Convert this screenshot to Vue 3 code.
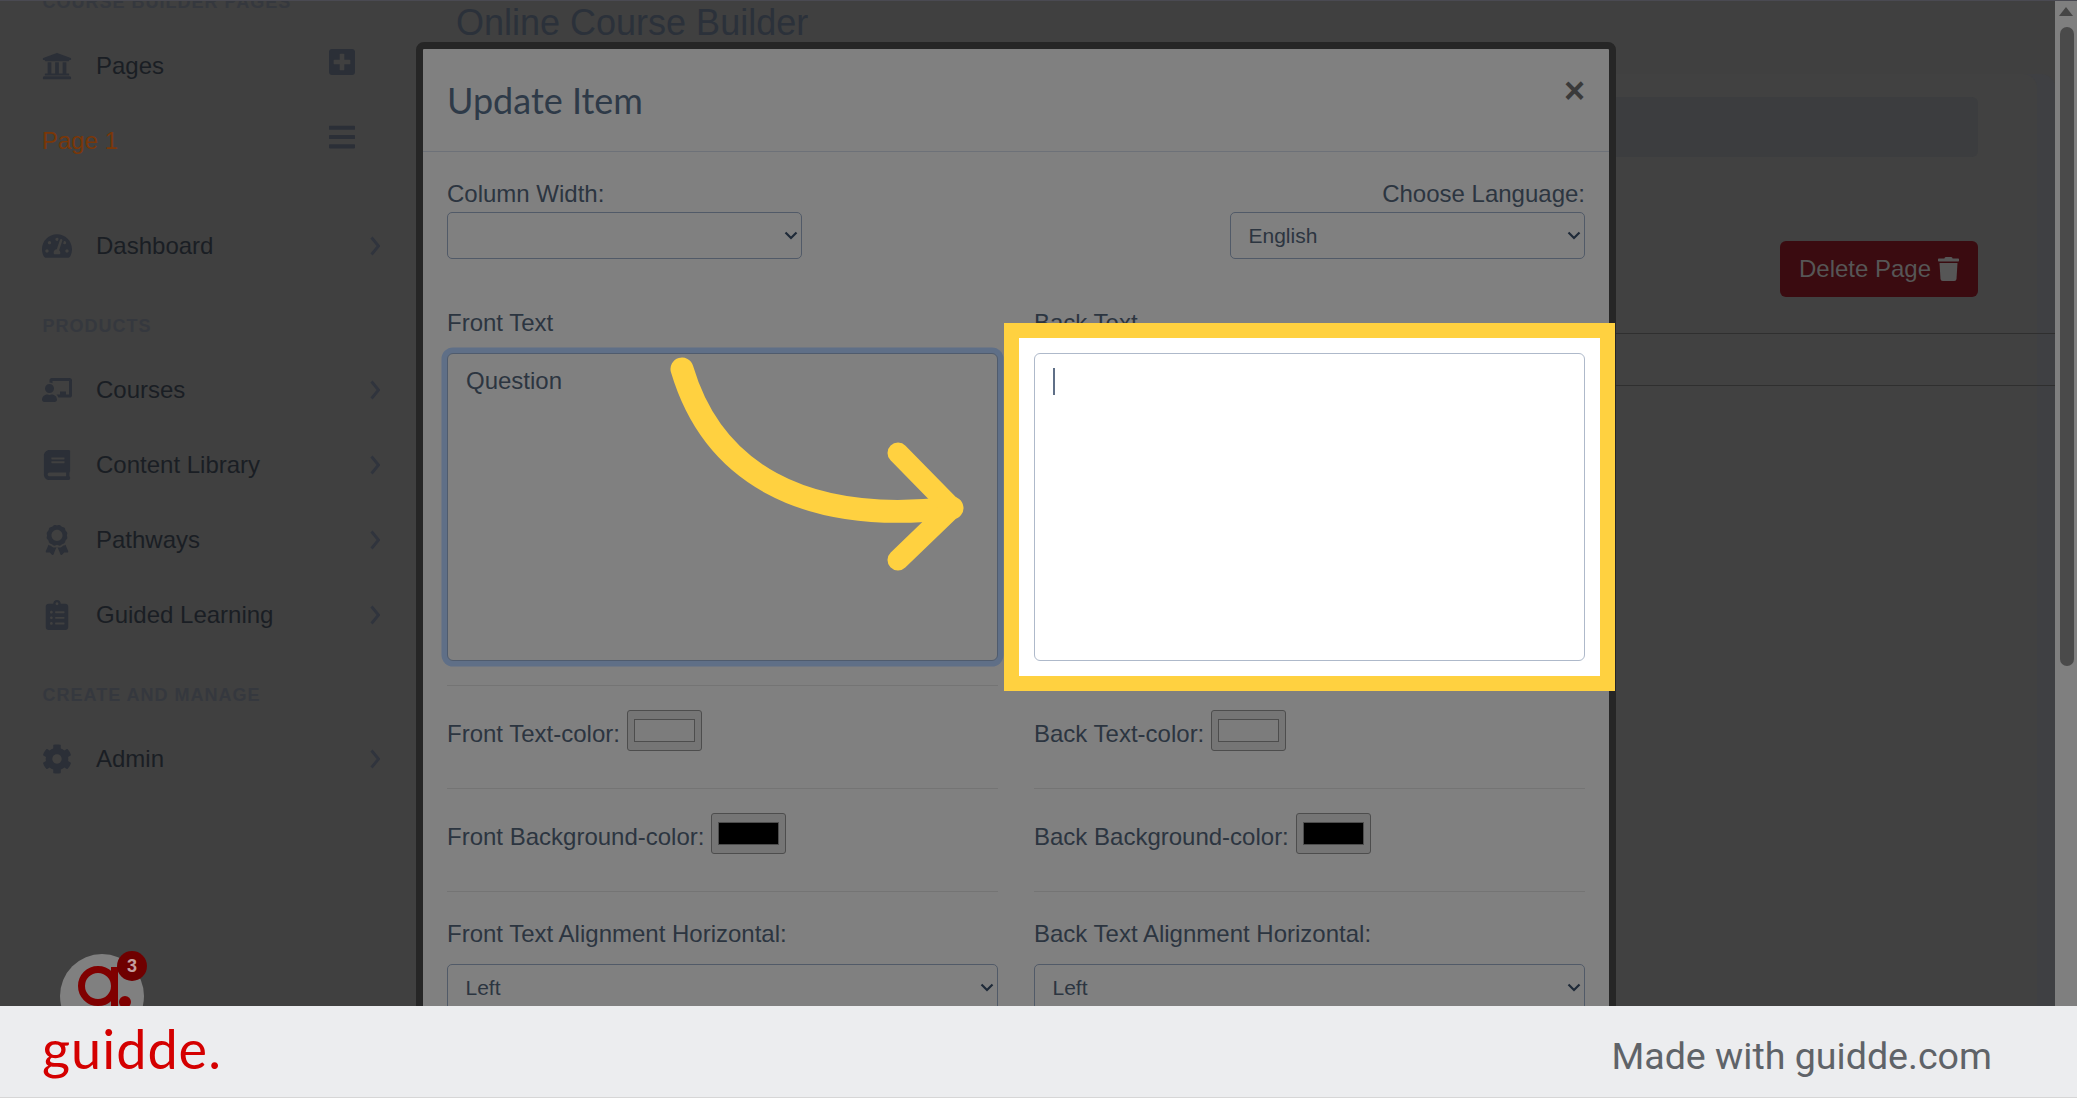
<script setup>
const ICONS = {
  university: { vb: '0 0 512 512', d: 'M496 128v16a8 8 0 0 1-8 8h-24v12c0 6.627-5.373 12-12 12H60c-6.627 0-12-5.373-12-12v-12H24a8 8 0 0 1-8-8v-16a8 8 0 0 1 4.941-7.392l232-88a7.996 7.996 0 0 1 6.118 0l232 88A8 8 0 0 1 496 128zm-24 304H40c-13.255 0-24 10.745-24 24v16a8 8 0 0 0 8 8h464a8 8 0 0 0 8-8v-16c0-13.255-10.745-24-24-24zM96 192v192H60c-6.627 0-12 5.373-12 12v20h416v-20c0-6.627-5.373-12-12-12h-36V192h-64v192h-64V192h-64v192h-64V192H96z' },
  plus: { vb: '0 0 448 512', d: 'M400 32H48C21.5 32 0 53.5 0 80v352c0 26.5 21.5 48 48 48h352c26.5 0 48-21.5 48-48V80c0-26.5-21.5-48-48-48zm-32 252c0 6.6-5.4 12-12 12h-92v92c0 6.6-5.4 12-12 12h-56c-6.6 0-12-5.4-12-12v-92H92c-6.6 0-12-5.4-12-12v-56c0-6.6 5.4-12 12-12h92v-92c0-6.6 5.4-12 12-12h56c6.6 0 12 5.4 12 12v92h92c6.6 0 12 5.4 12 12v56z' },
  bars: { vb: '0 0 448 512', d: 'M16 132h416c8.837 0 16-7.163 16-16V76c0-8.837-7.163-16-16-16H16C7.163 60 0 67.163 0 76v40c0 8.837 7.163 16 16 16zm0 160h416c8.837 0 16-7.163 16-16v-40c0-8.837-7.163-16-16-16H16c-8.837 0-16 7.163-16 16v40c0 8.837 7.163 16 16 16zm0 160h416c8.837 0 16-7.163 16-16v-40c0-8.837-7.163-16-16-16H16c-8.837 0-16 7.163-16 16v40c0 8.837 7.163 16 16 16z' },
  tacho: { vb: '0 0 576 512', d: 'M288 32C128.94 32 0 160.94 0 320c0 52.8 14.25 102.26 39.06 144.8 5.61 9.62 16.3 15.2 27.44 15.2h443c11.14 0 21.83-5.58 27.44-15.2C561.75 422.26 576 372.8 576 320c0-159.06-128.94-288-288-288zm0 64c14.71 0 26.58 10.13 30.32 23.65-1.11 2.26-2.64 4.23-3.45 6.67l-9.22 27.67c-5.13 3.49-10.97 6.01-17.64 6.01-17.67 0-32-14.33-32-32S270.33 96 288 96zM96 384c-17.67 0-32-14.33-32-32s14.33-32 32-32 32 14.33 32 32-14.33 32-32 32zm48-160c-17.67 0-32-14.33-32-32s14.33-32 32-32 32 14.33 32 32-14.33 32-32 32zm246.77-72.41l-61.33 184C343.13 347.33 352 364.54 352 384c0 11.72-3.38 22.55-8.88 32H232.88c-5.5-9.45-8.88-20.28-8.88-32 0-33.94 26.5-61.43 59.9-63.59l61.34-184.01c4.17-12.56 17.73-19.45 30.36-15.17 12.57 4.19 19.35 17.79 15.17 30.36zm14.66 57.2l15.52-46.55c3.47-1.29 7.13-2.23 11.05-2.23 17.67 0 32 14.33 32 32s-14.33 32-32 32c-11.38-.01-20.89-6.28-26.57-15.22zM480 384c-17.67 0-32-14.33-32-32s14.33-32 32-32 32 14.33 32 32-14.33 32-32 32z' },
  teacher: { vb: '0 0 640 512', d: 'M208 352c-2.39 0-4.78.35-7.06 1.09C187.98 357.3 174.35 360 160 360c-14.35 0-27.98-2.7-40.95-6.91-2.28-.74-4.66-1.09-7.05-1.09C49.94 352-.33 402.48 0 464.62.14 490.88 21.73 512 48 512h224c26.27 0 47.86-21.12 48-47.38.33-62.14-49.94-112.62-112-112.62zm-48-32c53.02 0 96-42.98 96-96s-42.98-96-96-96-96 42.98-96 96 42.98 96 96 96zM592 0H208c-26.47 0-48 22.25-48 49.59V96c23.42 0 45.1 6.78 64 17.8V64h352v288h-64v-64H384v64h-76.24c19.1 16.69 33.12 38.73 39.69 64H592c26.47 0 48-22.25 48-49.59V49.59C640 22.25 618.47 0 592 0z' },
  book: { vb: '0 0 448 512', d: 'M448 360V24c0-13.3-10.7-24-24-24H96C43 0 0 43 0 96v320c0 53 43 96 96 96h328c13.3 0 24-10.7 24-24v-16c0-7.5-3.5-14.3-8.9-18.7-4.2-15.4-4.2-59.3 0-74.7 5.4-4.3 8.9-11.1 8.9-18.6zM128 134c0-3.3 2.7-6 6-6h212c3.3 0 6 2.7 6 6v20c0 3.3-2.7 6-6 6H134c-3.3 0-6-2.7-6-6v-20zm0 64c0-3.3 2.7-6 6-6h212c3.3 0 6 2.7 6 6v20c0 3.3-2.7 6-6 6H134c-3.3 0-6-2.7-6-6v-20zm253.4 250H96c-17.7 0-32-14.3-32-32 0-17.6 14.4-32 32-32h285.4c-1.9 17.1-1.9 46.9 0 64z' },
  award: { vb: '0 0 384 512', d: 'M97.12 362.63c-8.69-8.69-4.16-6.24-25.12-11.85-9.51-2.55-17.87-7.45-25.43-13.32L1.2 448.7c-4.39 10.77 3.81 22.47 15.43 22.03l52.69-2.01L105.56 507c8 8.44 22.04 5.81 26.43-4.96l52.05-127.62c-10.84 6.04-22.87 9.58-35.31 9.58-19.5 0-37.82-7.59-51.61-21.37zM382.8 448.7l-45.37-111.24c-7.56 5.88-15.92 10.77-25.43 13.32-21.07 5.64-16.45 3.18-25.12 11.85-13.79 13.78-32.12 21.37-51.62 21.37-12.44 0-24.47-3.55-35.31-9.58L252 502.04c4.39 10.77 18.44 13.4 26.43 4.96l36.25-38.28 52.69 2.01c11.62.44 19.82-11.27 15.43-22.03zM263 340c15.28-15.55 17.03-14.21 38.79-20.14 13.89-3.79 24.75-14.84 28.47-28.98 7.48-28.4 5.54-24.97 25.95-45.75 10.17-10.35 14.14-25.44 10.42-39.58-7.47-28.38-7.48-24.42 0-52.83 3.72-14.14-.25-29.23-10.42-39.58-20.41-20.78-18.47-17.36-25.95-45.75-3.72-14.14-14.58-25.19-28.47-28.98-27.88-7.61-24.52-5.62-44.95-26.41-10.17-10.35-25-14.4-38.89-10.61-27.87 7.6-23.98 7.61-51.9 0-13.89-3.79-28.72.25-38.89 10.61-20.41 20.78-17.05 18.8-44.94 26.41-13.89 3.79-24.75 14.84-28.47 28.98-7.47 28.39-5.54 24.97-25.95 45.75-10.17 10.35-14.15 25.44-10.42 39.58 7.47 28.36 7.48 24.4 0 52.82-3.72 14.14.25 29.23 10.42 39.59 20.41 20.78 18.47 17.35 25.95 45.75 3.72 14.14 14.58 25.19 28.47 28.98C104.6 325.96 106.27 325 121 340c13.23 13.47 33.84 15.88 49.74 5.82a39.676 39.676 0 0 1 42.53 0c15.89 10.06 36.5 7.65 49.73-5.82zM97.66 175.96c0-53.03 42.24-96.02 94.34-96.02s94.34 42.99 94.34 96.02-42.24 96.02-94.34 96.02-94.34-42.99-94.34-96.02z' },
  clipboard: { vb: '0 0 384 512', d: 'M336 64h-80c0-35.3-28.7-64-64-64s-64 28.7-64 64H48C21.5 64 0 85.5 0 112v352c0 26.5 21.5 48 48 48h288c26.5 0 48-21.5 48-48V112c0-26.5-21.5-48-48-48zM96 424c-13.3 0-24-10.7-24-24s10.7-24 24-24 24 10.7 24 24-10.7 24-24 24zm0-96c-13.3 0-24-10.7-24-24s10.7-24 24-24 24 10.7 24 24-10.7 24-24 24zm0-96c-13.3 0-24-10.7-24-24s10.7-24 24-24 24 10.7 24 24-10.7 24-24 24zm96-192c13.3 0 24 10.7 24 24s-10.7 24-24 24-24-10.7-24-24 10.7-24 24-24zm128 368c0 4.4-3.6 8-8 8H168c-4.4 0-8-3.6-8-8v-16c0-4.4 3.6-8 8-8h144c4.4 0 8 3.6 8 8v16zm0-96c0 4.4-3.6 8-8 8H168c-4.4 0-8-3.6-8-8v-16c0-4.4 3.6-8 8-8h144c4.4 0 8 3.6 8 8v16zm0-96c0 4.4-3.6 8-8 8H168c-4.4 0-8-3.6-8-8v-16c0-4.4 3.6-8 8-8h144c4.4 0 8 3.6 8 8v16z' },
  cog: { vb: '0 0 512 512', d: 'M487.4 315.7l-42.6-24.6c4.3-23.2 4.3-47 0-70.2l42.6-24.6c4.9-2.8 7.1-8.6 5.5-14-11.1-35.6-30-67.8-54.7-94.6-3.8-4.1-10-5.1-14.8-2.3L380.8 110c-17.9-15.4-38.5-27.3-60.8-35.1V25.8c0-5.6-3.9-10.5-9.4-11.7-36.7-8.2-74.3-7.8-109.2 0-5.5 1.2-9.4 6.1-9.4 11.7V75c-22.2 7.9-42.8 19.8-60.8 35.1L88.7 85.5c-4.9-2.8-11-1.9-14.8 2.3-24.7 26.7-43.6 58.9-54.7 94.6-1.7 5.4.6 11.2 5.5 14L67.3 221c-4.3 23.2-4.3 47 0 70.2l-42.6 24.6c-4.9 2.8-7.1 8.6-5.5 14 11.1 35.6 30 67.8 54.7 94.6 3.8 4.1 10 5.1 14.8 2.3l42.6-24.6c17.9 15.4 38.5 27.3 60.8 35.1v49.2c0 5.6 3.9 10.5 9.4 11.7 36.7 8.2 74.3 7.8 109.2 0 5.5-1.2 9.4-6.1 9.4-11.7v-49.2c22.2-7.9 42.8-19.8 60.8-35.1l42.6 24.6c4.9 2.8 11 1.9 14.8-2.3 24.7-26.7 43.6-58.9 54.7-94.6 1.5-5.5-.7-11.3-5.6-14.1zM256 336c-44.1 0-80-35.9-80-80s35.9-80 80-80 80 35.9 80 80-35.9 80-80 80z' },
  trash: { vb: '0 0 448 512', d: 'M432 32H312l-9.4-18.7A24 24 0 0 0 281.1 0H166.8a23.72 23.72 0 0 0-21.4 13.3L136 32H16A16 16 0 0 0 0 48v32a16 16 0 0 0 16 16h416a16 16 0 0 0 16-16V48a16 16 0 0 0-16-16zM53.2 467a48 48 0 0 0 47.9 45h245.8a48 48 0 0 0 47.9-45L416 128H32z' }
}

const productItems = [
  { label: 'Courses', icon: 'teacher' },
  { label: 'Content Library', icon: 'book' },
  { label: 'Pathways', icon: 'award' },
  { label: 'Guided Learning', icon: 'clipboard' }
]

const colorRows = [
  { front: 'Front Text-color:', back: 'Back Text-color:', value: '#7c7c7c' },
  { front: 'Front Background-color:', back: 'Back Background-color:', value: '#000000' }
]
</script>

<template>
  <div class="page">
    <div class="viewport">
      <aside class="sidebar">
        <div class="section first">COURSE BUILDER PAGES</div>
        <div class="nav-row">
          <svg class="icon" :viewBox="ICONS.university.vb"><path :d="ICONS.university.d" /></svg>
          <span class="nav-label">Pages</span>
          <svg class="icon action" :viewBox="ICONS.plus.vb"><path :d="ICONS.plus.d" /></svg>
        </div>
        <div class="nav-row">
          <span class="page-link">Page 1</span>
          <svg class="icon action" :viewBox="ICONS.bars.vb"><path :d="ICONS.bars.d" /></svg>
        </div>
        <div class="nav-row dash">
          <svg class="icon" :viewBox="ICONS.tacho.vb"><path :d="ICONS.tacho.d" /></svg>
          <span class="nav-label">Dashboard</span>
          <svg class="chev" viewBox="0 0 10 20"><path d="M1.5 1.5 8.5 10 1.5 18.5" /></svg>
        </div>
        <div class="section">PRODUCTS</div>
        <div v-for="item in productItems" :key="item.label" class="nav-row">
          <svg class="icon" :viewBox="ICONS[item.icon].vb"><path :d="ICONS[item.icon].d" /></svg>
          <span class="nav-label">{{ item.label }}</span>
          <svg class="chev" viewBox="0 0 10 20"><path d="M1.5 1.5 8.5 10 1.5 18.5" /></svg>
        </div>
        <div class="section">CREATE AND MANAGE</div>
        <div class="nav-row">
          <svg class="icon" :viewBox="ICONS.cog.vb"><path :d="ICONS.cog.d" /></svg>
          <span class="nav-label">Admin</span>
          <svg class="chev" viewBox="0 0 10 20"><path d="M1.5 1.5 8.5 10 1.5 18.5" /></svg>
        </div>
      </aside>

      <main class="main">
        <h1 class="heading">Online Course Builder</h1>
        <section class="card">
          <div class="grey-box"></div>
          <div class="actions">
            <button class="delete-btn">
              <span>Delete Page</span>
              <svg class="trash" :viewBox="ICONS.trash.vb"><path :d="ICONS.trash.d" /></svg>
            </button>
          </div>
          <div class="lines">
            <div class="line-row"></div>
            <div class="line-row"></div>
          </div>
        </section>
      </main>

      <div class="scrollbar">
        <div class="scroll-up"></div>
        <div class="scroll-thumb"></div>
      </div>

      <div class="modal">
        <header class="modal-head">
          <h4 class="modal-title">Update Item</h4>
          <span class="close">×</span>
        </header>
        <div class="modal-body">
          <div class="top-row">
            <div class="top-field">
              <label class="lbl">Column Width:</label>
              <div class="sel">
                <select class="ctl"><option></option></select>
                <svg class="sel-chev" viewBox="0 0 14 9"><path d="M1.5 1.5 7 7 12.5 1.5" /></svg>
              </div>
            </div>
            <div class="top-field end">
              <label class="lbl">Choose Language:</label>
              <div class="sel">
                <select class="ctl"><option>English</option></select>
                <svg class="sel-chev" viewBox="0 0 14 9"><path d="M1.5 1.5 7 7 12.5 1.5" /></svg>
              </div>
            </div>
          </div>

          <div class="columns text-row">
            <div>
              <label class="lbl gap">Front Text</label>
              <textarea class="area focus" readonly>Question</textarea>
            </div>
            <div>
              <label class="lbl gap">Back Text</label>
              <div class="area back-area"><span class="caret"></span></div>
            </div>
          </div>

          <div v-for="row in colorRows" :key="row.front" class="columns">
            <div class="color-cell">
              <label class="lbl">{{ row.front }}</label>
              <input class="swatch" type="color" :value="row.value" />
            </div>
            <div class="color-cell">
              <label class="lbl">{{ row.back }}</label>
              <input class="swatch" type="color" :value="row.value" />
            </div>
          </div>

          <div class="columns">
            <div class="align-cell">
              <label class="lbl gap">Front Text Alignment Horizontal:</label>
              <div class="sel">
                <select class="ctl"><option>Left</option></select>
                <svg class="sel-chev" viewBox="0 0 14 9"><path d="M1.5 1.5 7 7 12.5 1.5" /></svg>
              </div>
            </div>
            <div class="align-cell">
              <label class="lbl gap">Back Text Alignment Horizontal:</label>
              <div class="sel">
                <select class="ctl"><option>Left</option></select>
                <svg class="sel-chev" viewBox="0 0 14 9"><path d="M1.5 1.5 7 7 12.5 1.5" /></svg>
              </div>
            </div>
          </div>
        </div>
      </div>

      <div class="spotlight"></div>

      <svg class="arrow" viewBox="0 0 300 240">
        <path class="shaft" d="M12 19 C42 120 130 176 282 158" />
        <path class="head" d="M228 103 L282 158 L228 210" />
      </svg>

      <div class="widget">
        <svg class="widget-mark" viewBox="0 0 84 84">
          <circle cx="38" cy="32" r="16.5" />
          <rect class="solid" x="51" y="13" width="7" height="40" />
          <circle class="solid" cx="65" cy="48" r="6" />
        </svg>
        <span class="widget-badge">3</span>
      </div>
    </div>

    <footer class="footer">
      <span class="brand">guidde.</span>
      <span class="made">Made with guidde.com</span>
    </footer>
  </div>
</template>

<style>
html, body { margin: 0; background: #404040; }
</style>

<style scoped>
.page {
  width: 2077px;
  height: 1098px;
  display: flex;
  flex-direction: column;
  overflow: hidden;
  font-family: "Liberation Sans", Arial, sans-serif;
}
.viewport {
  position: relative;
  flex: 1;
  min-height: 0;
  display: flex;
  overflow: hidden;
  background: #404040;
}
.viewport::before {
  content: "";
  position: absolute;
  z-index: 1;
  left: 0;
  right: 0;
  top: 0;
  height: 1px;
  background: #4a4a52;
}

/* sidebar */
.sidebar {
  width: 416px;
  flex: none;
  margin-top: -11px;
}
.section {
  height: 26px;
  line-height: 26px;
  margin: 29.5px 0 13.5px 42.5px;
  font-size: 18px;
  font-weight: 700;
  letter-spacing: 1px;
  color: #35383e;
}
.section.first { margin-top: 0; margin-bottom: 13.5px; }
.nav-row {
  height: 75px;
  display: flex;
  align-items: center;
  padding: 0 36px 0 42px;
}
.nav-row.dash { margin-top: 30px; }
.icon {
  width: 30px;
  height: 30px;
  flex: none;
  fill: #2b2f37;
}
.icon.action { width: 26px; margin: 0 25px 8px auto; }
.nav-label {
  margin-left: 24px;
  font-size: 24px;
  color: #1a1e24;
}
.page-link {
  margin-left: 0;
  font-size: 24px;
  color: #7a3708;
}
.chev {
  width: 10px;
  height: 20px;
  margin-left: auto;
  fill: none;
  stroke: #30343d;
  stroke-width: 2.8;
}

/* page behind the modal */
.main {
  flex: 1;
  min-width: 0;
  padding-left: 40px;
}
.heading {
  margin: 0;
  height: 45px;
  line-height: 45px;
  font-size: 36px;
  font-weight: 400;
  color: #2b313a;
}
.card {
  margin: 29px 18px 0 -40px;
  height: 932px;
  padding: 23px 59px 0 0;
  background: #414141;
  border-top-right-radius: 14px;
  box-shadow: 18px 0 0 #3f4043;
  box-sizing: border-box;
}
.grey-box {
  height: 60px;
  background: #3c3d3f;
  border-radius: 6px;
}
.actions {
  display: flex;
  justify-content: flex-end;
  margin-top: 84px;
}
.delete-btn {
  height: 56px;
  width: 198px;
  display: flex;
  align-items: center;
  justify-content: center;
  gap: 7px;
  padding: 0;
  border: 0;
  border-radius: 6px;
  background: #3a0b10;
  color: #565656;
  font: 24px "Liberation Sans", Arial, sans-serif;
}
.trash { width: 21px; height: 24px; fill: #565656; }
.lines {
  margin: 36px -77px 0 0;
}
.line-row {
  height: 52px;
  box-sizing: border-box;
  border-top: 1.5px solid #2f2f2f;
}

/* scrollbar */
.scrollbar {
  position: relative;
  width: 22px;
  flex: none;
  background: #7f7f7f;
}
.scroll-up {
  width: 0;
  margin: 7px auto 0;
  border-left: 7px solid transparent;
  border-right: 7px solid transparent;
  border-bottom: 9px solid #454545;
}
.scroll-thumb {
  width: 14px;
  height: 639px;
  margin: 11px 0 0 5px;
  border-radius: 7px;
  background: #4a4a4a;
}

/* modal */
.modal {
  position: absolute;
  left: 416px;
  top: 42px;
  width: 1200px;
  box-sizing: border-box;
  border: 7px solid #262626;
  border-radius: 8px;
  background: #808080;
  color: #2c3540;
}
.modal-head {
  height: 103px;
  box-sizing: border-box;
  display: flex;
  justify-content: space-between;
  padding: 29px 24px 0;
  border-bottom: 1.5px solid #6d7178;
}
.modal-title {
  margin: 0;
  font: 400 36px/44px Lato, sans-serif;
  color: #2e3a48;
}
.close {
  font-size: 36px;
  line-height: 36px;
  margin-top: -5px;
  font-weight: 700;
  color: #3a3a3a;
}
.modal-body { padding: 24px 24px 0; }
.lbl {
  display: block;
  font-size: 24px;
  line-height: 36px;
  color: #2c3540;
}
.lbl.gap { margin-bottom: 12px; }
.top-row {
  display: flex;
  justify-content: space-between;
}
.top-field { width: 355px; }
.top-field.end { text-align: right; }
.sel { position: relative; }
.ctl {
  display: block;
  width: 100%;
  height: 47px;
  padding: 0 36px 0 17.5px;
  box-sizing: border-box;
  appearance: none;
  border: 1.5px solid #515a68;
  border-radius: 5px;
  background: #808080;
  color: #2c3540;
  font: 21px "Liberation Sans", Arial, sans-serif;
}
.sel-chev {
  position: absolute;
  right: 4.5px;
  top: 19px;
  width: 14px;
  height: 9px;
  fill: none;
  stroke: #1f2a38;
  stroke-width: 2.2;
  pointer-events: none;
}
.columns {
  display: grid;
  grid-template-columns: 551px 551px;
  column-gap: 36px;
}
.text-row { margin-top: 46px; padding-bottom: 24px; }
.area {
  display: block;
  width: 100%;
  height: 308px;
  box-sizing: border-box;
  padding: 9px 18px;
  resize: none;
  outline: none;
  border: 1.5px solid #4f5b6d;
  border-radius: 6px;
  background: #808080;
  color: #2c3540;
  font: 24px/36px "Liberation Sans", Arial, sans-serif;
}
.area.focus { box-shadow: 0 0 0 5.5px #5f6f87; }
.back-area {
  position: relative;
  z-index: 3;
  padding-top: 14px;
  background: #fff;
  border-color: #aeb9ca;
}
.caret {
  display: block;
  width: 2px;
  height: 27px;
  background: #5f6f87;
}
.color-cell {
  display: flex;
  align-items: flex-start;
  gap: 7px;
  padding: 24px 0 36px;
  border-top: 1.5px solid #747474;
}
.color-cell .lbl { margin-top: 6px; }
.swatch {
  width: 75px;
  height: 41px;
  box-sizing: border-box;
  padding: 8px 6px;
  border: 1px solid #4d4d4d;
  border-radius: 3px;
  background: #757575;
}
.swatch::-webkit-color-swatch-wrapper { padding: 0; }
.swatch::-webkit-color-swatch { border: 1px solid #4d4d4d; border-radius: 0; }
.align-cell {
  padding-top: 24px;
  border-top: 1.5px solid #747474;
}

/* spotlight */
.spotlight {
  position: absolute;
  z-index: 2;
  left: 1004px;
  top: 323px;
  width: 611px;
  height: 368px;
  box-sizing: border-box;
  border: 15px solid #ffd140;
  background: #fff;
}
.arrow {
  position: absolute;
  z-index: 4;
  left: 670px;
  top: 350px;
  width: 300px;
  height: 240px;
  fill: none;
  stroke: #ffd140;
  stroke-linecap: round;
  stroke-linejoin: round;
}
.shaft { stroke-width: 23; }
.head { stroke-width: 21; }

/* floating widget */
.widget {
  position: absolute;
  left: 60px;
  top: 954px;
  width: 84px;
  height: 84px;
  border-radius: 50%;
  background: #808080;
}
.widget-mark {
  width: 84px;
  height: 84px;
  fill: none;
  stroke: #800000;
  stroke-width: 7;
}
.widget-mark .solid { fill: #800000; stroke: none; }
.widget-badge {
  position: absolute;
  left: 57px;
  top: -3px;
  width: 30px;
  height: 30px;
  border-radius: 50%;
  background: #6f0000;
  color: #c4a0a0;
  font-size: 18px;
  font-weight: 700;
  line-height: 30px;
  text-align: center;
}

/* footer */
.footer {
  height: 92px;
  flex: none;
  box-sizing: border-box;
  display: flex;
  align-items: center;
  justify-content: space-between;
  padding: 0 85px 0 42px;
  background: #ecedef;
  border-bottom: 1.5px solid #d6d6d6;
}
.brand {
  font: 400 54px/60px Lato, sans-serif;
  letter-spacing: 1px;
  color: #d40000;
  margin-top: -6px;
}
.made {
  font: 400 37.6px/44px Roboto, sans-serif;
  color: #5f6368;
  margin-top: 8px;
}
</style>
